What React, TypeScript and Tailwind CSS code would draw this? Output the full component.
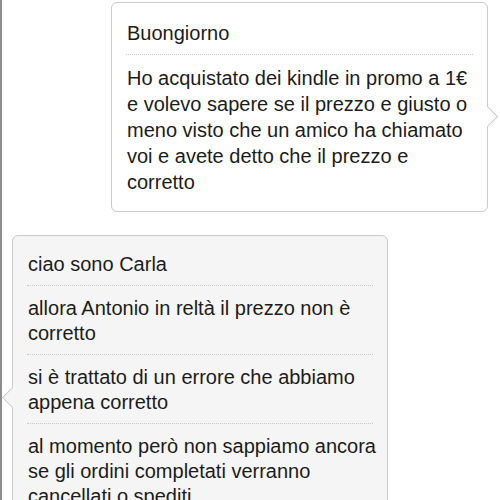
import React from "react";

const Sep = () => <div className="mx-[14px] border-t border-dotted border-[#c9c9c9]" />;

function Seg({ lines, lh = "leading-[25px]" }: { lines: string[]; lh?: string }) {
  return (
    <div className={"px-[15px] pt-[10px] pb-[8px] " + lh}>
      {lines.map((l, i) => (
        <div key={i} className="whitespace-nowrap">
          {l}
        </div>
      ))}
    </div>
  );
}

export default function App() {
  return (
    <div
      className="w-[500px] h-[500px] overflow-hidden bg-white border-l-2 border-[#8c8c8c] flex flex-col text-[20px] leading-[25px] text-[#1c1c1c]"
      style={{ fontFamily: '"Liberation Sans", Arial, sans-serif' }}
    >
      <div className="relative shrink-0 self-end mr-[12px] mt-[2px] w-[377px] h-[210px] rounded-[6px] border border-[#cacaca] bg-white pt-[8px]">
        <div className="absolute right-[-8px] top-[106px] w-[15px] h-[15px] rotate-45 bg-white border-t border-r border-[#cacaca]" />
        <Seg lines={["Buongiorno"]} />
        <Sep />
        <Seg
          lh="leading-[26px]"
          lines={[
            "Ho acquistato dei kindle in promo a 1€",
            "e volevo sapere se il prezzo e giusto o",
            "meno visto che un amico ha chiamato",
            "voi e avete detto che il prezzo e",
            "corretto",
          ]}
        />
      </div>
      <div className="relative shrink-0 ml-[10px] mt-[23px] w-[376px] h-[300px] rounded-[6px] border border-[#cacaca] bg-[#f5f5f5] pt-[6px]">
        <div className="absolute left-[-8px] top-[154px] w-[15px] h-[15px] rotate-45 bg-[#f5f5f5] border-b border-l border-[#cacaca]" />
        <Seg lines={["ciao sono Carla"]} />
        <Sep />
        <Seg lines={["allora Antonio in reltà il prezzo non è", "corretto"]} />
        <Sep />
        <Seg lines={["si è trattato di un errore che abbiamo", "appena corretto"]} />
        <Sep />
        <Seg
          lines={[
            "al momento però non sappiamo ancora",
            "se gli ordini completati verranno",
            "cancellati o spediti",
          ]}
        />
      </div>
    </div>
  );
}
